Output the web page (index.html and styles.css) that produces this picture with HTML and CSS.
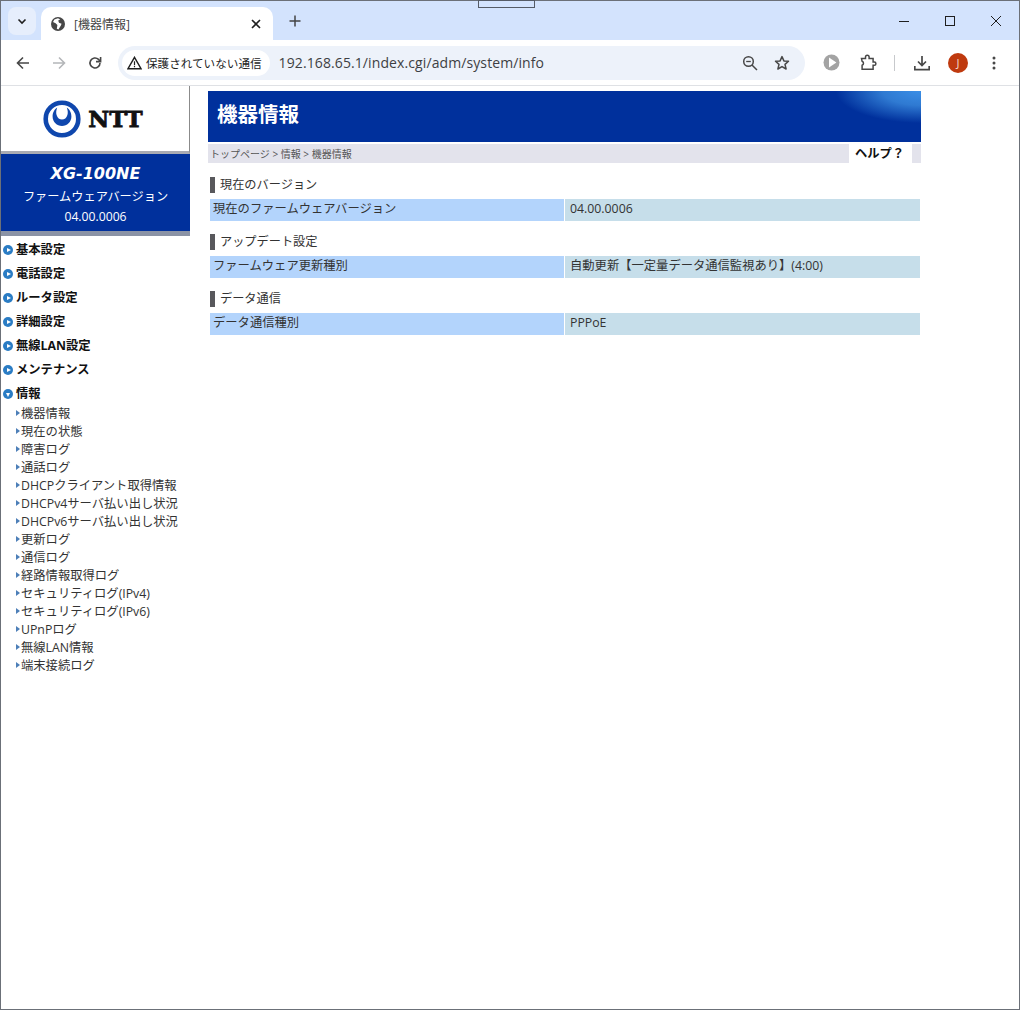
FILE: index.html
```html
<!DOCTYPE html>
<html lang="ja">
<head>
    <meta charset="UTF-8">
    <title>[機器情報]</title>
    <link rel="stylesheet" href="styles.css">
</head>
<body>
<div class="window">
    <div class="tabstrip">
        <div class="snap-mark"></div>
        <div class="tab-search">
            <svg width="12" height="12" viewBox="0 0 12 12"><path d="M2.5 4.5 6 8l3.5-3.5" fill="none" stroke="#1f1f1f" stroke-width="1.6"/></svg>
        </div>
        <div class="tab">
            <svg class="favicon" width="16" height="16" viewBox="0 0 16 16"><circle cx="8" cy="8" r="7" fill="#474747"/><path d="M8 2.2 4.4 3.4 3 6l2.6 1.2L7.4 9l-.6 3.8 1.6.6 2.2-3.4 1-2.2-2.6-1-.8-2.2 2-1.2z" fill="#fff"/></svg>
            <span class="tab-title">[機器情報]</span>
            <svg class="tab-close" width="12" height="12" viewBox="0 0 12 12"><path d="M2 2l8 8M10 2l-8 8" stroke="#1f1f1f" stroke-width="1.6"/></svg>
        </div>
        <svg class="new-tab" width="14" height="14" viewBox="0 0 14 14"><path d="M7 1.5v11M1.5 7h11" stroke="#444" stroke-width="1.5"/></svg>
        <div class="win-controls">
            <svg width="12" height="12" viewBox="0 0 12 12"><path d="M1 6.5h10" stroke="#1f1f1f" stroke-width="1"/></svg>
            <svg width="12" height="12" viewBox="0 0 12 12"><rect x="1.5" y="1.5" width="9" height="9" fill="none" stroke="#1f1f1f" stroke-width="1"/></svg>
            <svg width="12" height="12" viewBox="0 0 12 12"><path d="M1 1l10 10M11 1L1 11" stroke="#1f1f1f" stroke-width="1"/></svg>
        </div>
    </div>

    <div class="toolbar">
        <svg class="nav-btn" width="16" height="16" viewBox="0 0 16 16"><path d="M14 8H2.5M8 2.5 2.5 8 8 13.5" fill="none" stroke="#474747" stroke-width="1.6"/></svg>
        <svg class="nav-btn" width="16" height="16" viewBox="0 0 16 16"><path d="M2 8h11.5M8 2.5 13.5 8 8 13.5" fill="none" stroke="#b4b6b9" stroke-width="1.6"/></svg>
        <svg class="nav-btn" width="16" height="16" viewBox="0 0 16 16"><path d="M13 8a5 5 0 1 1-1.5-3.6L13 6" fill="none" stroke="#474747" stroke-width="1.6"/><path d="M13.6 2v4.6H9" fill="none" stroke="#474747" stroke-width="1.6"/></svg>
        <div class="omnibox">
            <div class="security-chip">
                <svg width="15" height="14" viewBox="0 0 15 14"><path d="M7.5 1.3 14 12.7H1z" fill="none" stroke="#1f1f1f" stroke-width="1.4"/><path d="M7.5 5.2v4M7.5 10v1.2" stroke="#1f1f1f" stroke-width="1.2"/></svg>
                <span>保護されていない通信</span>
            </div>
            <span class="url">192.168.65.1/index.cgi/adm/system/info</span>
            <svg class="omni-zoom" width="16" height="16" viewBox="0 0 16 16"><circle cx="6.5" cy="6.5" r="4.8" fill="none" stroke="#474747" stroke-width="1.5"/><path d="M10 10l5 5" stroke="#474747" stroke-width="1.5"/><path d="M4.2 6.5h4.6" stroke="#474747" stroke-width="1.3"/></svg>
            <svg class="omni-star" width="16" height="16" viewBox="0 0 16 16"><path d="M8 1.6l1.9 4.3 4.6.4-3.5 3.1 1.1 4.6L8 11.6l-4.1 2.4L5 9.4 1.5 6.3l4.6-.4z" fill="none" stroke="#474747" stroke-width="1.5" stroke-linejoin="round"/></svg>
        </div>
        <div class="tool-icons">
            <svg class="ext-play" width="17" height="17" viewBox="0 0 17 17"><circle cx="8.5" cy="8.5" r="8" fill="#a3a3a3"/><path d="M6 3.6v9.8l7.4-4.9z" fill="#fff"/></svg>
            <svg class="ext-puzzle" width="17" height="17" viewBox="0 0 17 17"><path d="M1.5 4.5h4V3a1.8 1.8 0 0 1 3.6 0v1.5h4v3.6h1.2a1.6 1.6 0 0 1 0 3.2h-1.2v4h-11v-4a2.2 2.2 0 0 0 1.4-2 2.2 2.2 0 0 0-1.4-2z" fill="none" stroke="#474747" stroke-width="1.5"/></svg>
            <div class="tool-sep"></div>
            <svg class="download" width="16" height="16" viewBox="0 0 16 16"><path d="M8 1v9M4 6.5l4 4 4-4" fill="none" stroke="#474747" stroke-width="1.7"/><path d="M.8 11v3.6h14.4V11" fill="none" stroke="#474747" stroke-width="1.7"/></svg>
            <div class="avatar">J</div>
            <svg class="kebab" width="4" height="14" viewBox="0 0 4 14"><circle cx="2" cy="2" r="1.5" fill="#474747"/><circle cx="2" cy="7" r="1.5" fill="#474747"/><circle cx="2" cy="12" r="1.5" fill="#474747"/></svg>
        </div>
    </div>

    <div class="page">
        <div class="sidebar">
            <div class="logo-box">
                <svg width="38" height="38" viewBox="0 0 38 38"><circle cx="19" cy="19" r="16.3" fill="none" stroke="#0f47ad" stroke-width="4.6"/><path d="M14.2 7.5C10.5 10 9.6 13.800 9.600 16.500C9.600 22 14 26 19 26C24 26 28.400 22 28.400 16.500C28.400 13.800 27.500 10 23.800 7.500C24.700 10 25.200 12.500 24.400 15C23.500 18 21.500 19.600 19 19.600C16.500 19.600 14.500 18 13.600 15C12.800 12.500 13.300 10 14.200 7.500Z" fill="#0f47ad"/></svg>
                <span class="logo-text">NTT</span>
            </div>
            <div class="model-box">
                <div class="model-name">XG-100NE</div>
                <div class="model-line">ファームウェアバージョン</div>
                <div class="model-line">04.00.0006</div>
            </div>
            <ul class="menu">
                <li class="menu-item"><span class="bullet"></span>基本設定</li>
                <li class="menu-item"><span class="bullet"></span>電話設定</li>
                <li class="menu-item"><span class="bullet"></span>ルータ設定</li>
                <li class="menu-item"><span class="bullet"></span>詳細設定</li>
                <li class="menu-item"><span class="bullet"></span>無線LAN設定</li>
                <li class="menu-item"><span class="bullet"></span>メンテナンス</li>
                <li class="menu-item open"><span class="bullet"></span>情報</li>
            </ul>
            <ul class="submenu">
                <li>機器情報</li>
                <li>現在の状態</li>
                <li>障害ログ</li>
                <li>通話ログ</li>
                <li>DHCPクライアント取得情報</li>
                <li>DHCPv4サーバ払い出し状況</li>
                <li>DHCPv6サーバ払い出し状況</li>
                <li>更新ログ</li>
                <li>通信ログ</li>
                <li>経路情報取得ログ</li>
                <li>セキュリティログ(IPv4)</li>
                <li>セキュリティログ(IPv6)</li>
                <li>UPnPログ</li>
                <li>無線LAN情報</li>
                <li>端末接続ログ</li>
            </ul>
        </div>

        <div class="main">
            <h1 class="page-title">機器情報</h1>
            <div class="crumbs">
                <span class="crumb-text">トップページ &gt; 情報 &gt; 機器情報</span>
                <span class="help">ヘルプ？</span>
            </div>

            <h2 class="section-title">現在のバージョン</h2>
            <div class="info-row">
                <div class="info-label">現在のファームウェアバージョン</div>
                <div class="info-value">04.00.0006</div>
            </div>

            <h2 class="section-title">アップデート設定</h2>
            <div class="info-row">
                <div class="info-label">ファームウェア更新種別</div>
                <div class="info-value">自動更新【一定量データ通信監視あり】(4:00)</div>
            </div>

            <h2 class="section-title">データ通信</h2>
            <div class="info-row">
                <div class="info-label">データ通信種別</div>
                <div class="info-value">PPPoE</div>
            </div>
        </div>
    </div>
</div>
</body>
</html>
```

FILE: styles.css
```css
* {
    box-sizing: border-box;
}
html, body {
    margin: 0;
    padding: 0;
}
body {
    width: 1020px;
    height: 1010px;
    overflow: hidden;
    background: #fff;
    font-family: "Open Sans", "Noto Sans CJK JP", sans-serif;
    color: #222;
}
ul {
    list-style: none;
    margin: 0;
    padding: 0;
}
.window {
    width: 1020px;
    height: 1010px;
    border: 1px solid #6b7078;
    display: flex;
    flex-direction: column;
}

/* browser chrome */
.tabstrip {
    height: 39px;
    flex: none;
    background: #d3e3fd;
    display: flex;
    align-items: flex-end;
    position: relative;
    padding-left: 7px;
}
.snap-mark {
    position: absolute;
    left: 477px;
    top: -1px;
    width: 57px;
    height: 8px;
    border: 1px solid #555b66;
}
.tab-search {
    width: 28px;
    height: 28px;
    margin-bottom: 5px;
    border-radius: 8px;
    background: #e6eefc;
    display: flex;
    align-items: center;
    justify-content: center;
}
.tab {
    width: 232px;
    height: 33px;
    margin-left: 5px;
    background: #fff;
    border-radius: 10px 10px 0 0;
    display: flex;
    align-items: center;
    padding: 0 11px 0 9px;
}
.tab-title {
    margin-left: 8px;
    flex: 1;
    font-size: 12px;
    color: #444;
}
.new-tab {
    margin: 0 0 12px 15px;
}
.win-controls {
    position: absolute;
    right: 17px;
    top: 14px;
    display: flex;
    gap: 34px;
}
.toolbar {
    height: 46px;
    flex: none;
    background: #fff;
    border-bottom: 1px solid #dfe1e5;
    border-radius: 10px 10px 0 0;
    display: flex;
    align-items: center;
    padding-left: 14px;
}
.nav-btn {
    margin-right: 20px;
}
.omnibox {
    width: 687px;
    height: 34px;
    margin-left: -5px;
    background: #edf2fa;
    border-radius: 17px;
    display: flex;
    align-items: center;
    padding: 0 15px 0 4px;
}
.security-chip {
    height: 26px;
    padding: 0 8px 0 5px;
    background: #fff;
    border-radius: 13px;
    display: flex;
    align-items: center;
    gap: 4px;
    font-size: 11.6px;
    color: #1f1f1f;
}
.url {
    margin-left: 9px;
    flex: 1;
    font-size: 14px;
    color: #3d3f43;
    letter-spacing: 0.1px;
}
.omni-star {
    margin-left: 16px;
}
.tool-icons {
    display: flex;
    align-items: center;
    margin-left: 18px;
}
.ext-puzzle {
    margin-left: 20px;
}
.tool-sep {
    width: 1px;
    height: 16px;
    background: #c7c9cc;
    margin-left: 17px;
}
.download {
    margin-left: 19px;
}
.avatar {
    width: 20px;
    height: 20px;
    margin-left: 18px;
    border-radius: 50%;
    background: #bf3a0f;
    color: #f4d9cc;
    font-size: 11px;
    line-height: 20px;
    text-align: center;
}
.kebab {
    margin-left: 24px;
}

/* router page */
.page {
    flex: 1;
    display: flex;
}
.sidebar {
    width: 189px;
    flex: none;
}
.logo-box {
    height: 68px;
    background: #fff;
    border-right: 1px solid #8b8b8b;
    border-bottom: 3px solid #a9abb3;
    display: flex;
    align-items: center;
    justify-content: center;
    gap: 7px;
    padding: 0 6px 0 2px;
}
.logo-text {
    font-family: "DejaVu Serif", serif;
    font-weight: 900;
    font-size: 23px;
    letter-spacing: 0;
    color: #111;
    -webkit-text-stroke: 0.8px #111;
}
.model-box {
    height: 82px;
    background: #00309c;
    border-bottom: 5px solid #8b93a5;
    color: #fff;
    text-align: center;
    padding-top: 8px;
}
.model-name {
    font-family: "DejaVu Sans", sans-serif;
    font-weight: bold;
    font-style: italic;
    font-size: 16px;
    line-height: 24px;
    margin-bottom: 1px;
}
.model-line {
    font-size: 12.2px;
    line-height: 20px;
}
.menu-item {
    height: 24px;
    padding-top: 4px;
    line-height: 20px;
    font-size: 12.3px;
    font-weight: bold;
    color: #111;
    display: flex;
    align-items: center;
}
.bullet {
    width: 10px;
    height: 10px;
    margin: 0 3px 0 2px;
    border-radius: 50%;
    background: #2a7cc4;
    position: relative;
    flex: none;
}
.bullet::after {
    content: "";
    position: absolute;
    left: 3.5px;
    top: 2.5px;
    border-left: 4px solid #fff;
    border-top: 2.5px solid transparent;
    border-bottom: 2.5px solid transparent;
}
.open .bullet::after {
    left: 2.5px;
    top: 3.5px;
    border-top: 4px solid #fff;
    border-left: 2.5px solid transparent;
    border-right: 2.5px solid transparent;
    border-bottom: 0;
}
.submenu {
    padding-top: 1px;
}
.submenu li {
    height: 18px;
    line-height: 18px;
    padding-left: 20px;
    font-size: 12.3px;
    color: #333;
    white-space: nowrap;
    position: relative;
}
.submenu li::before {
    content: "";
    position: absolute;
    left: 15px;
    top: 5px;
    border-left: 4px solid #4d7fb8;
    border-top: 3px solid transparent;
    border-bottom: 3px solid transparent;
}
.main {
    flex: 1;
    padding: 5px 0 0 18px;
}
.page-title {
    width: 713px;
    height: 51px;
    margin: 0;
    padding-left: 9px;
    font-size: 20.5px;
    line-height: 47px;
    font-weight: bold;
    color: #fff;
    background:
        radial-gradient(ellipse 85px 32px at 100% 0, #3a8ee6 0, #2f7ad2 45%, rgba(0, 48, 156, 0) 100%),
        #00309c;
}
.crumbs {
    width: 713px;
    height: 19px;
    margin-top: 2px;
    background: #e3e3ec;
    display: flex;
    justify-content: space-between;
    align-items: stretch;
    padding: 0 9px 0 2px;
}
.crumb-text {
    font-size: 10px;
    line-height: 20px;
    color: #555;
}
.help {
    width: 63px;
    background: #fff;
    padding-left: 6px;
    font-size: 12.3px;
    line-height: 20px;
    font-weight: bold;
    color: #111;
}
.section-title {
    width: 712px;
    height: 16px;
    margin: 14px 0 6px 2px;
    border-left: 5px solid #58585c;
    padding-left: 5px;
    font-size: 12.2px;
    line-height: 16px;
    font-weight: normal;
    color: #333;
}
.info-row + .section-title {
    margin-top: 13px;
}
.info-row {
    width: 710px;
    margin-left: 2px;
    height: 22px;
    display: flex;
    font-size: 12.3px;
    line-height: 20px;
    color: #333;
}
.info-label {
    width: 354px;
    background: #b3d4fc;
    padding-left: 3px;
    margin-right: 1px;
}
.info-value {
    flex: 1;
    background: #c6deea;
    padding-left: 5px;
}
```
